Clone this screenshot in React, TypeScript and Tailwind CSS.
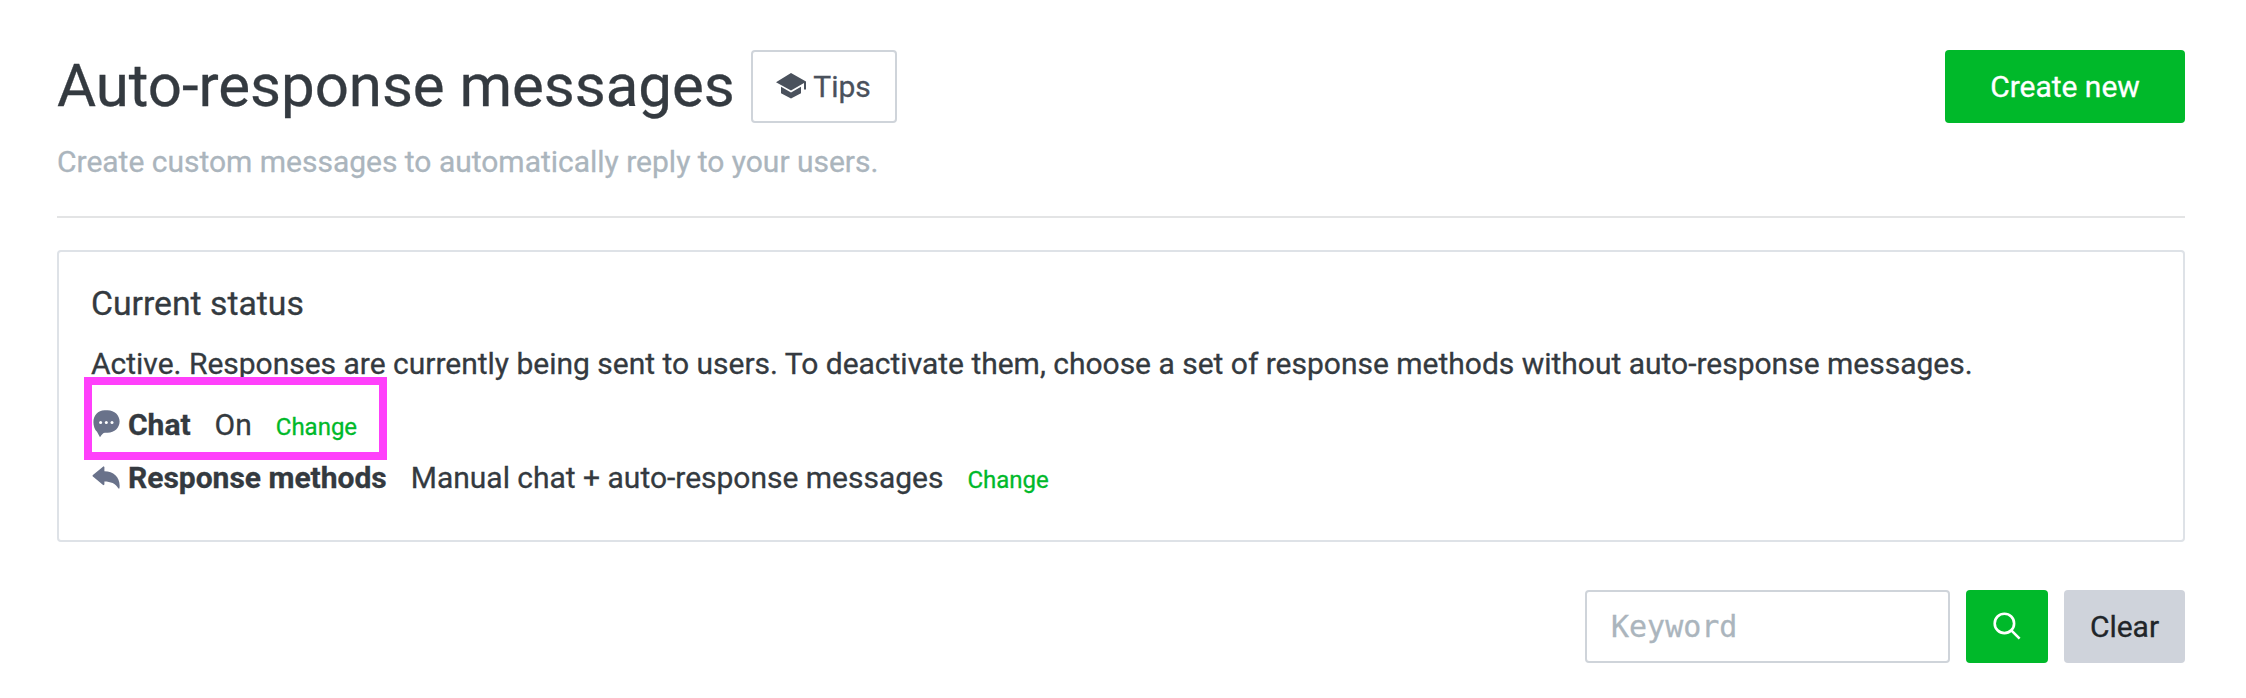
import React from "react";

const linkClass = "ml-6 text-2xl leading-[30px] text-[#00b92a]";

function CapIcon() {
  return (
    <svg className="h-[26px] w-[30px] -translate-y-px" viewBox="0 0 30 26" fill="#4a515c">
      <path d="M15 0 30 8.6V16.6H28V9.9L15 17.6 0 9.2Z" />
      <path d="M5 13.8 15 19.6 25 13.8V20.2L15 25.6 5 20.2Z" />
    </svg>
  );
}

function ChatIcon() {
  return (
    <svg className="h-7 w-7" viewBox="0 0 28 28">
      <path
        fill="#69728a"
        d="M12.6 0.3H15.6C22.6 0.3 27.6 5.4 27.6 11.6S22.6 22.8 15.6 22.8H13C11 22.8 10 24.4 8 27.2L5 21.8C2.6 19.6 1.4 15.6 1.4 12.2 1.4 5.4 6 0.3 12.6 0.3Z"
      />
      <g fill="#fff">
        <circle cx="8.6" cy="12.5" r="1.5" />
        <circle cx="14.3" cy="12.5" r="1.5" />
        <circle cx="20" cy="12.5" r="1.5" />
      </g>
    </svg>
  );
}

function ReplyIcon() {
  return (
    <svg className="h-[23px] w-7 -translate-y-px" viewBox="0 0 28 23" fill="#69728a">
      <path d="M11.6 0.3 12.4 1V5.2C22.5 5.4 29 12.4 27.4 22.4H26.4C23.6 17.6 18.6 15.6 12.4 15.6V18.4L11.4 19.2 0.6 10.2V9.2Z" />
    </svg>
  );
}

function SearchIcon() {
  return (
    <svg className="h-7 w-7 -translate-y-px" viewBox="0 0 28 28" fill="none" stroke="#fff" strokeWidth="2.6">
      <circle cx="11.4" cy="11.4" r="9.7" />
      <path d="M18.3 18.3 26.6 26.6" />
    </svg>
  );
}

export default function App() {
  return (
    <main className="flex h-[698px] w-full flex-col bg-white pt-[50px] pr-[61px] pl-[57px] font-['Roboto',sans-serif] text-[30px] leading-[46px] tracking-[-0.01px] text-[#343a40] [-webkit-text-stroke:0.3px]">
      <header className="flex h-[168px] flex-col border-b-2 border-[#e3e4e5]">
        <div className="flex h-[73px] items-center">
          <h1 className="-mt-[3px] text-[60px] leading-[73px] tracking-[-0.04px] whitespace-nowrap">Auto-response messages</h1>
          <button className="ml-4 flex h-[73px] w-[146px] items-center justify-center gap-[7px] rounded-[4px] border-2 border-[#cfd4da] text-[#4a515c]">
            <CapIcon />
            <span>Tips</span>
          </button>
          <button className="ml-auto h-[73px] w-60 rounded-[4px] bg-[#00b92a] text-white">Create new</button>
        </div>
        <p className="mt-4 whitespace-nowrap text-[#abb5bd]">Create custom messages to automatically reply to your users.</p>
      </header>

      <section className="mt-8 h-[292px] rounded-[4px] border-2 border-[#dee2e7] px-8 pt-[29px]">
        <h2 className="text-[33.75px] leading-[46px]">Current status</h2>
        <p className="mt-[14px] whitespace-nowrap">
          Active. Responses are currently being sent to users. To deactivate them, choose a set of response methods without auto-response messages.
        </p>
        <div className="relative mt-[15px] flex h-[46px] items-baseline">
          <span className="flex w-[37px] -translate-y-px translate-x-px self-center">
            <ChatIcon />
          </span>
          <b className="font-bold">Chat</b>
          <span className="ml-6">On</span>
          <a className={linkClass}>Change</a>
          <span className="absolute -top-[25px] -left-[7px] h-[83px] w-[303px] border-8 border-[#ff40fb]" />
        </div>
        <div className="mt-[7px] flex h-[46px] items-baseline">
          <span className="flex w-[37px] translate-x-px self-center">
            <ReplyIcon />
          </span>
          <b className="font-bold">Response methods</b>
          <span className="ml-6">Manual chat + auto-response messages</span>
          <a className={linkClass}>Change</a>
        </div>
      </section>

      <div className="mt-12 flex h-[73px] justify-end gap-4">
        <input
          className="w-[365px] rounded-[4px] border-2 border-[#cfd4da] px-6 font-['DejaVu_Sans_Mono',monospace] text-[30px] tracking-normal placeholder:text-[#abb5bd]"
          placeholder="Keyword"
        />
        <button className="flex w-[82px] items-center justify-center rounded-[4px] bg-[#00b92a]">
          <SearchIcon />
        </button>
        <button className="w-[121px] rounded-[4px] bg-[#cfd3db] text-[#212529]">Clear</button>
      </div>
    </main>
  );
}
